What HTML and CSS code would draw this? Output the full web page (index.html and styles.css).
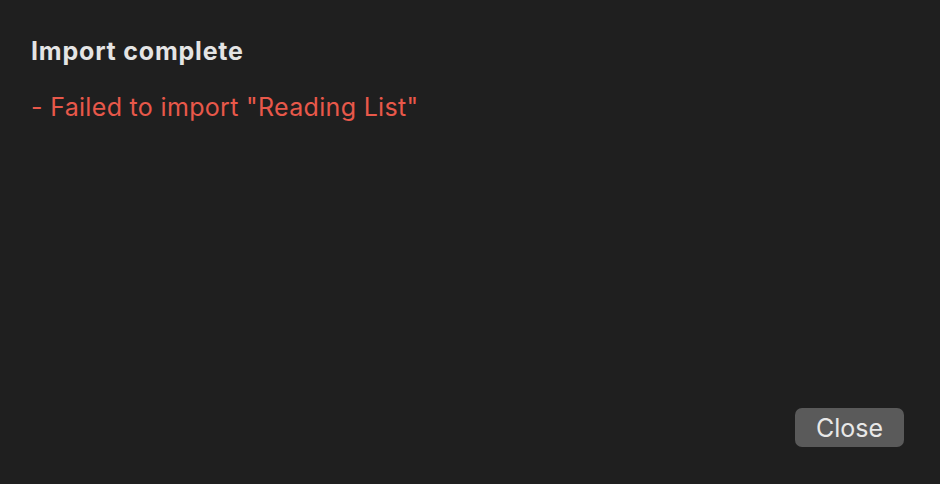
FILE: index.html
```html
<!DOCTYPE html>
<html>
<head>
<meta charset="utf-8">
<link rel="stylesheet" href="styles.css">
</head>
<body>
<div class="dialog">
  <h1 class="title">Import complete</h1>
  <p class="error">- Failed to import "Reading List"</p>
  <div class="actions">
    <button class="btn">Close</button>
  </div>
</div>
</body>
</html>
```
FILE: styles.css
```css
html, body {
  margin: 0;
  padding: 0;
  height: 100%;
  background: #1f1f1f;
}
.dialog {
  box-sizing: border-box;
  height: 484px;
  width: 940px;
  display: flex;
  flex-direction: column;
  padding: 36px 36px 37px 31px;
  font-family: Inter, "Noto Sans", sans-serif;
  background: #1f1f1f;
}
.title {
  margin: 0;
  font-size: 25px;
  font-weight: 700;
  color: #e4e4e4;
  line-height: 30px;
  letter-spacing: 0.8px;
}
.error {
  margin: 26px 0 0;
  font-size: 25px;
  font-weight: 400;
  color: #e8584a;
  line-height: 30px;
  letter-spacing: 0.32px;
}
.actions {
  margin-top: auto;
  display: flex;
  justify-content: flex-end;
}
.btn {
  width: 109px;
  height: 39px;
  border: none;
  border-radius: 7px;
  background: #5a5a5a;
  color: #e8e8e8;
  font-family: Inter, "Noto Sans", sans-serif;
  font-size: 25px;
  padding: 0;
}
```
